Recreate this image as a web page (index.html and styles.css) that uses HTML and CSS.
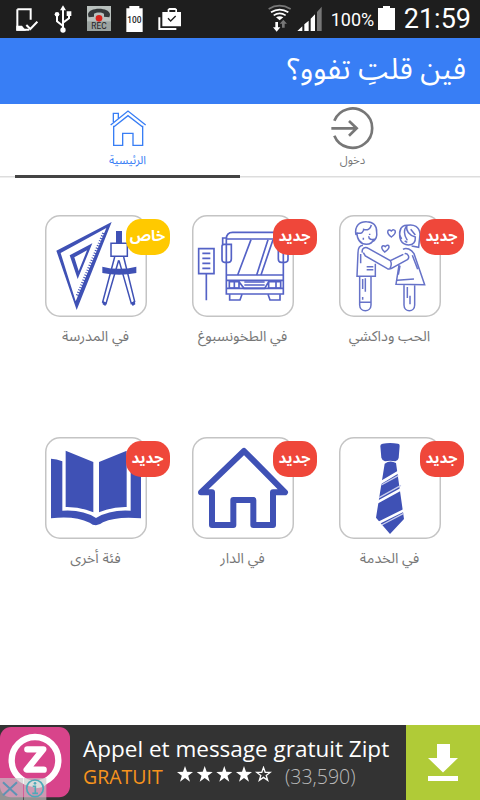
FILE: index.html
```html
<!DOCTYPE html>
<html lang="ar">
<head>
    <meta charset="UTF-8">
    <meta name="viewport" content="width=device-width, initial-scale=1.0">
    <title>فين قلتِ تفوو؟</title>
    <link rel="stylesheet" href="styles.css">
</head>
<body>
    <!-- Status bar -->
    <div class="status-bar">
        <div class="status-left">
            <svg width="23" height="24" viewBox="45 18 69 72">
                <path d="M52 25H92V56M52 25V86H88" fill="none" stroke="#fff" stroke-width="6"/>
                <path d="M49 74H66L78 89H49Z" fill="#fff"/>
                <path d="M79 72l12 12 21-22" fill="none" stroke="#fff" stroke-width="6"/>
            </svg>
            <svg width="18" height="28" viewBox="163 17 54 84">
                <path d="M190 26V92M190 80L172 66V49M190 70L208 57V44" fill="none" stroke="#fff" stroke-width="6"/>
                <path d="M181 33L190 18L199 33ZM201 36h14v14h-14z" fill="#fff"/>
                <circle cx="172" cy="45" r="7" fill="#fff"/>
                <circle cx="190" cy="92" r="8" fill="#fff"/>
            </svg>
            <svg width="24" height="25" viewBox="261 20 72 75">
                <rect x="261" y="20" width="72" height="75" fill="#b9c0bd"/>
                <path d="M261 66h72v29h-72z" fill="#9ba3a0"/>
                <path d="M264 46c0-24 66-24 66 0l-2 8-16-2v-9c-8-5-22-5-30 0v9l-16 2z" fill="#34383a"/>
                <circle cx="297" cy="57" r="10" fill="#d8231d"/>
                <text x="297" y="90" class="rec-text">REC</text>
            </svg>
            <svg width="17" height="26" viewBox="381 18 51 78">
                <path d="M391 18h30v7h10v71h-49V25h9z" fill="#fff"/>
                <text x="406" y="69" class="battery-text">100</text>
            </svg>
            <svg width="24" height="24" viewBox="479 18 72 72">
                <path d="M492 33h16v-8l5-4h18l5 4v8h12v43h-56zM513 33h18v-6h-18z" fill="#fff" fill-rule="evenodd"/>
                <path d="M483 49v35h51" fill="none" stroke="#fff" stroke-width="6"/>
                <path d="M509 52l8 8 15-15" fill="none" stroke="#1e1e1e" stroke-width="4"/>
            </svg>
        </div>
        <div class="status-right">
            <svg width="24" height="28" viewBox="81 12 72 84">
                <path d="M83 27q32-20 66 0" fill="none" stroke="#777" stroke-width="5"/>
                <path d="M90 37q26-16 52 0M98 46q18-12 36 0" fill="none" stroke="#fff" stroke-width="5"/>
                <path d="M105 52q11-7 22 0l-11 9z" fill="#fff"/>
                <path d="M103 66h8v16h7l-11 13-11-13h7z" fill="#fff"/>
                <path d="M123 83h8V71h7l-11-12-11 12h7z" fill="#777"/>
            </svg>
            <svg class="signal" width="25" height="25" viewBox="169 16 75 75">
                <path d="M170 91l15-14v14zM191 91V71l13-11v31zM210 91V54l13-13v50z" fill="#fff"/>
                <path d="M229 91V34l14-16v73z" fill="#777"/>
            </svg>
            <span class="percent">100%</span>
            <svg class="battery" width="17" height="24" viewBox="0 0 17 24">
                <path d="M5 0h7v2h5v22H0V2h5z" fill="#fff"/>
            </svg>
            <span class="clock">21:59</span>
        </div>
    </div>

    <!-- Title -->
    <header class="header" dir="rtl">
        <h1>فين قلتِ تفوو؟</h1>
    </header>

    <!-- Tabs -->
    <nav class="tabs" dir="rtl">
        <a class="tab">
            <svg width="44" height="44" viewBox="273 18 132 132">
                <path d="M283 62A59 59 0 1 1 283 107" fill="none" stroke="#777" stroke-width="8"/>
                <path d="M274 85h76M327 63l23 22-23 22" fill="none" stroke="#777" stroke-width="8"/>
            </svg>
            <span>دخول</span>
        </a>
        <a class="tab active">
            <svg width="44" height="44" viewBox="317 18 132 132">
                <path d="M331 75L383 33L436 75M340 77V136H367V100H398V136H427V77M340 81L383 47L427 81M339 66V40H354V55" fill="none" stroke="#387ef5" stroke-width="4"/>
            </svg>
            <span>الرئيسية</span>
        </a>
    </nav>

    <!-- Categories -->
    <main class="grid" dir="rtl">
        <div class="item">
            <div class="card">
                <svg viewBox="27 30 306 306" class="line-icon">
                    <path d="M78 90C72 62 90 49 110 50C130 50 141 62 140 82C142 94 137 103 130 109M80 82C82 108 92 117 109 118C120 118 128 112 131 103M82 84C94 88 101 80 101 73C113 78 122 70 124 60M116 94c0 9 10 12 18 8M100 98v6M119 86v4"/>
                    <path d="M99 121C88 122 84 130 84 143L81 214H136V176M97 143C94 131 105 123 115 130L181 167L220 148M100 143L106 153L172 191Q181 194 190 187L232 164C240 158 235 144 224 146M181 167Q187 177 180 190M92 147v28M110 185h20M110 194h20"/>
                    <path d="M89 214V300C89 323 123 323 123 300V214M89 292H123M98 222v30M98 276v8M106 220v40"/>
                    <path d="M215 102C202 84 211 60 232 61C252 57 268 65 270 87L266 127L245 123M213 70C202 101 215 119 235 120C251 120 257 110 256 96C239 91 228 79 230 62M232 62C220 72 221 90 232 106M242 73L256 90M224 108l8 4"/>
                    <path d="M219 133C229 126 244 133 252 146L284 239L198 238L207 180M202 226l50-4M247 151l16 42M205 209l5-27M222 240V300C222 323 254 323 254 300V241M232 246v33M240 272v26"/>
                    <path d="M184 96C166 83 174 68 184 78C195 68 204 82 184 96ZM164 141C148 126 158 118 166 125C174 113 187 127 164 141Z"/>
                </svg>
                <span class="badge">جديد</span>
            </div>
            <p>الحب وداكشي</p>
        </div>
        <div class="item">
            <div class="card">
                <svg viewBox="36 30 306 306" class="line-icon bus-icon">
                    <path d="M56 131H102V206H56ZM79 206V286M67 145H91M67 160H91M67 175H91M67 190H91"/>
                    <path d="M139 267V102Q139 82 158 82H292Q310 82 310 102V267ZM141 102H309M139 210H310M139 226H310M139 250H310"/>
                    <path d="M139 99H128V120M126 124Q126 118 133 118H154V162Q154 172 145 172H133Q126 172 126 163ZM295 118H317Q324 118 324 126V163Q324 172 315 172H304Q295 172 295 162ZM213 104L173 210M264 104L230 210M279 104L243 210"/>
                    <path d="M148 230H177V249H148ZM163 230V249M266 230H302V249H266ZM288 230V249M177 230L192 250H254L266 230M193 231H254M193 240H254M149 268V285H180L186 268M264 268L270 285H300V268"/>
                </svg>
                <span class="badge">جديد</span>
            </div>
            <p>في الطخونسبوغ</p>
        </div>
        <div class="item">
            <div class="card">
                <svg viewBox="45 30 306 306">
                    <path d="M79 137L245 51L140 315ZM92 144L137 289L229 69ZM119 151L187 115L143 222ZM133 157L146 198L171 136Z" fill="#3f51b5" fill-rule="evenodd"/>
                    <path d="M222 85L143 273" fill="none" stroke="#3f51b5" stroke-width="12" stroke-dasharray="3 5"/>
                    <path d="M258 78h18v36h-18z" fill="#3f51b5"/>
                    <path d="M243 115H292V154H243ZM254 156L218 291L228 296L266 166M281 156L314 290L304 296L267 166" fill="none" stroke="#3f51b5" stroke-width="4.500"/>
                    <path d="M217 185Q267 198 319 185V204Q267 215 217 204ZM218 288l12 5-4 10-8-5zM303 293l11-5 2 10-8 5z" fill="#3f51b5"/>
                </svg>
                <span class="badge special">خاص</span>
            </div>
            <p>في المدرسة</p>
        </div>
        <div class="item">
            <div class="card">
                <svg viewBox="27 21 306 306">
                    <path d="M158 41Q180 37 204 41Q209 41 209 47L206 84Q204 92 196 94Q180 90 165 94Q156 91 154 83L151 48Q151 42 158 41ZM164 101Q180 89 198 99L222 267L180 312L138 263Z" fill="#3f51b5"/>
                    <path d="M150 159L207 125M140 218L218 175M143 280L226 239" stroke="#fff" stroke-width="8"/>
                    <path d="M154 165L205 137M147 203L213 166M155 285L221 250" stroke="#c8cdec" stroke-width="4"/>
                </svg>
                <span class="badge">جديد</span>
            </div>
            <p>في الخدمة</p>
        </div>
        <div class="item">
            <div class="card">
                <svg viewBox="36 21 306 306">
                    <path d="M63 187L192 63L315 187H279V285H220V210H160V285H96V187Z" fill="none" stroke="#3f51b5" stroke-width="18" stroke-linejoin="round"/>
                </svg>
                <span class="badge">جديد</span>
            </div>
            <p>في الدار</p>
        </div>
        <div class="item">
            <div class="card">
                <svg viewBox="45 21 306 306">
                    <path d="M63 86Q80 87 97 94V242Q159 238 198 264Q240 238 302 242V94Q318 87 333 86V265Q260 258 219 277Q198 294 179 278Q133 256 63 265Z" fill="#3f51b5"/>
                    <path d="M107 62L190 96V247Q150 230 107 231ZM290 62L207 96V247Q248 230 290 231Z" fill="#3f51b5"/>
                </svg>
                <span class="badge">جديد</span>
            </div>
            <p>فئة أخرى</p>
        </div>
    </main>

    <!-- Ad banner -->
    <footer class="ad">
        <div class="ad-logo">
            <svg width="70" height="75" viewBox="0 30 210 225">
                <rect x="0" y="36" width="210" height="211" rx="33" fill="#d8448b"/>
                <circle cx="105" cy="136" r="70" fill="none" stroke="#fff" stroke-width="19"/>
                <path d="M75 196Q102 212 113 195L150 192Q140 218 108 220Q90 216 75 196Z" fill="#fff"/>
                <path d="M82 103H130L80 164H131" fill="none" stroke="#fff" stroke-width="19" stroke-linecap="round" stroke-linejoin="round"/>
                <path d="M0 189h70v66H0zM72 189h67v66H72z" fill="#c8c8c8" fill-opacity=".65"/>
                <path d="M9 202l42 39M51 202L9 241" stroke="#5e93b4" stroke-width="6"/>
                <circle cx="105" cy="220" r="25" fill="none" stroke="#4ea9b8" stroke-width="5"/>
                <path d="M98 214h8v20M97 235h17" fill="none" stroke="#4ea9b8" stroke-width="5"/>
                <circle cx="105" cy="205" r="4" fill="#4ea9b8"/>
            </svg>
        </div>
        <div class="ad-text">
            <div class="ad-title">Appel et message gratuit Zipt</div>
            <div class="ad-info">
                <span class="free">GRATUIT</span>
                <svg width="95" height="17" viewBox="0 0 95 17">
                    <defs>
                        <path id="star" d="M8 0l2 5.800 6 .1-4.800 3.800 1.800 6L8 12.100l-5 3.600 1.800-6L0 5.900l6-.1z"/>
                    </defs>
                    <g fill="#fff">
                        <use href="#star"/>
                        <use href="#star" x="19.700"/>
                        <use href="#star" x="39.300"/>
                        <use href="#star" x="59"/>
                    </g>
                    <path d="M86.500 1.500l1.700 4.800 5 .1-4 3.100 1.500 4.900-4.200-3-4.200 3 1.500-4.900-4-3.100 5-.1z" fill="none" stroke="#fff" stroke-width="1.300"/>
                </svg>
                <span class="count">(33,590)</span>
            </div>
        </div>
        <div class="ad-download">
            <svg width="30" height="37" viewBox="0 0 30 37">
                <path d="M9 0h13v14h8L15 28.500 0 14h9zM0 32h30v5H0z" fill="#fff"/>
            </svg>
        </div>
    </footer>
</body>
</html>
```

FILE: styles.css
```css
* {
    box-sizing: border-box;
}
body {
    font-family: "Noto Sans", "Noto Sans Arabic", "DejaVu Sans", sans-serif;
    margin: 0;
    height: 800px;
    display: flex;
    flex-direction: column;
    background-color: #fff;
    overflow: hidden;
}
svg {
    display: block;
    flex-shrink: 0;
}
.status-bar {
    height: 38px;
    padding: 0 9px 0 15px;
    background-color: #1e1e1e;
    color: #fff;
    font-family: Roboto, sans-serif;
    display: flex;
    justify-content: space-between;
}
.status-left {
    display: flex;
    align-items: center;
    gap: 15px;
    padding-bottom: 1px;
}
.status-left svg:nth-child(1) {
    margin-right: 1px;
}
.rec-text {
    font-size: 25px;
    text-anchor: middle;
    fill: #222;
}
.battery-text {
    font-size: 25px;
    font-weight: 500;
    text-anchor: middle;
    fill: #1e1e1e;
}
.status-right {
    display: flex;
    align-items: center;
}
.status-right svg {
    margin-bottom: 2px;
}
.status-right .signal {
    margin: 0 9px 1px 5px;
}
.percent {
    font-size: 18px;
    width: 42px;
    margin-right: 5px;
    padding-top: 1px;
}
.status-right .battery {
    margin: 0 9px 2px 0;
}
.clock {
    font-size: 27px;
    line-height: 38px;
}
.header {
    height: 66px;
    background-color: #387ef5;
    padding: 0 14px;
}
.header h1 {
    margin: 0;
    color: #fff;
    font-size: 29.500px;
    font-weight: 400;
    line-height: 59px;
}
.tabs {
    height: 74px;
    padding: 0 15px;
    display: flex;
    background: linear-gradient(#ddd, #ddd) 0 72px / 100% 1.500px no-repeat;
}
.tab {
    flex: 1;
    display: flex;
    flex-direction: column;
    align-items: center;
    padding-top: 2px;
    color: #777;
    font-size: 11.500px;
    line-height: 19px;
}
.tab.active {
    color: #387ef5;
    border-bottom: 3px solid #444;
}
.grid {
    flex: 1;
    padding: 37px 16px 0 22px;
    display: grid;
    grid-template-columns: repeat(3, 147px);
    grid-template-rows: 222px 222px;
    justify-content: end;
}
.item {
    display: flex;
    flex-direction: column;
    align-items: center;
}
.item p {
    margin: 4px 0 0;
    color: #777;
    font-size: 14.400px;
    line-height: 30px;
    white-space: nowrap;
}
.card {
    position: relative;
    width: 102px;
    height: 102px;
    border-radius: 15px;
    box-shadow: inset 0 0 0 1.500px #c4c4c4;
}
.card svg {
    width: 102px;
    height: 102px;
}
.line-icon {
    fill: none;
    stroke: #6672c8;
    stroke-width: 4.500;
}
.bus-icon {
    stroke: #5462c6;
    stroke-width: 5;
}
.badge {
    position: absolute;
    top: 4px;
    right: -23px;
    width: 44px;
    height: 36px;
    border-radius: 15px;
    background-color: #ef473a;
    color: #fff;
    font-size: 15px;
    font-weight: 700;
    line-height: 32px;
    text-align: center;
}
.badge.special {
    background-color: #ffc900;
}
.ad {
    height: 75px;
    background-color: #333;
    display: flex;
    font-family: "Open Sans", sans-serif;
}
.ad-text {
    flex: 1;
    padding: 7px 0 0 13px;
    white-space: nowrap;
}
.ad-title {
    color: #fff;
    font-size: 22.500px;
    line-height: 33px;
}
.ad-info {
    display: flex;
    align-items: center;
    font-size: 19.500px;
    line-height: 23px;
}
.ad-info svg {
    margin-bottom: 4px;
}
.free {
    width: 80px;
    margin-right: 14px;
    color: #f7941d;
}
.count {
    margin-left: 13px;
    color: #bbb;
    font-weight: 300;
}
.ad-download {
    width: 74px;
    background-color: #b0cb37;
    display: flex;
    align-items: center;
    justify-content: center;
}
```
